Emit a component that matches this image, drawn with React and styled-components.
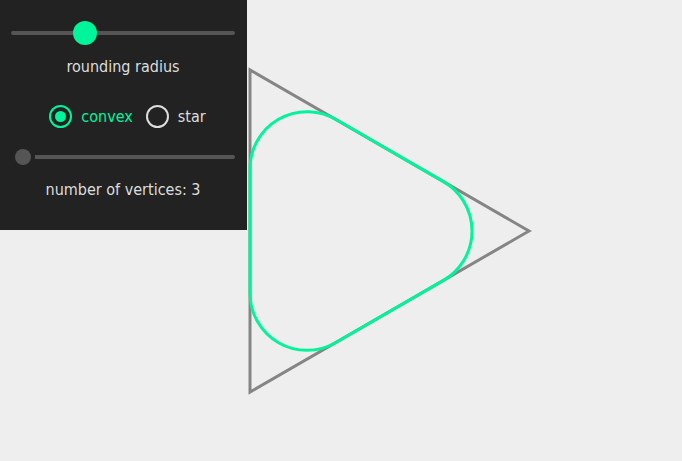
import React, { useState } from "react";
import styled, { createGlobalStyle } from "styled-components";

const GREEN = "#00f59a";

const GlobalStyle = createGlobalStyle`
  html, body {
    margin: 0;
    padding: 0;
    background: #eeeeee;
    font-family: "DejaVu Sans Condensed", "DejaVu Sans", sans-serif;
  }
`;

const Page = styled.div`
  position: relative;
  width: 682px;
  height: 461px;
  overflow: hidden;
  background: #eeeeee;
`;

const Canvas = styled.svg`
  display: block;
  width: 100%;
  height: 100%;
`;

const Panel = styled.div`
  position: absolute;
  top: 0;
  left: 0;
  width: 247px;
  height: 230px;
  box-sizing: border-box;
  background: #222222;
  padding: 21px 12px 0 11px;
  display: flex;
  flex-direction: column;
  align-items: stretch;
  color: #dddddd;
  font-size: 16px;
`;

const SliderBox = styled.div`
  position: relative;
  height: 24px;
  margin-top: ${({ $top }) => $top || 0}px;
  display: flex;
  align-items: center;
`;

const Track = styled.div`
  flex: 1;
  height: 4px;
  border-radius: 2px;
  background: #555555;
`;

const Thumb = styled.div`
  position: absolute;
  top: 50%;
  width: ${({ $size }) => $size}px;
  height: ${({ $size }) => $size}px;
  border-radius: 50%;
  background: ${({ $color }) => $color};
  box-shadow: 0 0 0 ${({ $ring }) => $ring || 0}px #222222;
  transform: translate(-50%, -50%);
`;

const Label = styled.div`
  text-align: center;
  line-height: 20px;
  margin-top: ${({ $top }) => $top}px;
`;

const RadioRow = styled.div`
  display: flex;
  justify-content: center;
  align-items: center;
  gap: 13px;
  margin-top: 27px;
  padding-left: 9px;
  height: 24px;
`;

const RadioOption = styled.label`
  display: flex;
  align-items: center;
  gap: 9px;
  cursor: pointer;
  color: ${({ $active }) => ($active ? GREEN : "#dddddd")};
`;

const RadioCircle = styled.span`
  width: 19px;
  height: 19px;
  border-radius: 50%;
  border: 2px solid ${({ $active }) => ($active ? GREEN : "#dddddd")};
  display: flex;
  align-items: center;
  justify-content: center;

  &::after {
    content: "";
    width: 11px;
    height: 11px;
    border-radius: 50%;
    background: ${GREEN};
    display: ${({ $active }) => ($active ? "block" : "none")};
  }
`;

function Slider({ pos, size, color, ring, top }) {
  return (
    <SliderBox $top={top}>
      <Track />
      <Thumb style={{ left: pos }} $size={size} $color={color} $ring={ring} />
    </SliderBox>
  );
}

function roundedPolygon(cx, cy, R, n, r) {
  const pts = [];
  for (let i = 0; i < n; i++) {
    const a = (i / n) * Math.PI * 2;
    pts.push([cx + R * Math.cos(a), cy + R * Math.sin(a)]);
  }
  const half = Math.PI / n;
  const t = r / Math.tan(Math.PI / 2 - half);
  let d = "";
  pts.forEach((p, i) => {
    const prev = pts[(i + n - 1) % n];
    const next = pts[(i + 1) % n];
    const toward = (q) => {
      const dx = q[0] - p[0];
      const dy = q[1] - p[1];
      const len = Math.hypot(dx, dy);
      return [p[0] + (dx / len) * t, p[1] + (dy / len) * t];
    };
    const a = toward(prev);
    const b = toward(next);
    d += `${i === 0 ? "M" : "L"}${a[0]},${a[1]} A${r},${r} 0 0 1 ${b[0]},${b[1]} `;
  });
  return d + "Z";
}

export default function App() {
  const [mode, setMode] = useState("convex");
  const cx = 343;
  const cy = 231;
  const R = 186;
  const tri = [0, 1, 2]
    .map((i) => {
      const a = (i / 3) * Math.PI * 2;
      return `${cx + R * Math.cos(a)},${cy + R * Math.sin(a)}`;
    })
    .join(" ");

  return (
    <Page>
      <GlobalStyle />
      <Canvas viewBox="0 0 682 461">
        <polygon points={tri} fill="none" stroke="#858585" strokeWidth="3" />
        <path
          d={roundedPolygon(cx, cy, R, 3, 57)}
          fill="none"
          stroke={GREEN}
          strokeWidth="3"
        />
      </Canvas>
      <Panel>
        <Slider pos={74} size={24} color={GREEN} />
        <Label $top={12}>rounding radius</Label>
        <RadioRow>
          <RadioOption $active={mode === "convex"} onClick={() => setMode("convex")}>
            <RadioCircle $active={mode === "convex"} />
            convex
          </RadioOption>
          <RadioOption $active={mode === "star"} onClick={() => setMode("star")}>
            <RadioCircle $active={mode === "star"} />
            star
          </RadioOption>
        </RadioRow>
        <Slider pos={12} size={16} color="#555555" ring={4} top={17} />
        <Label $top={11}>number of vertices: 3</Label>
      </Panel>
    </Page>
  );
}
